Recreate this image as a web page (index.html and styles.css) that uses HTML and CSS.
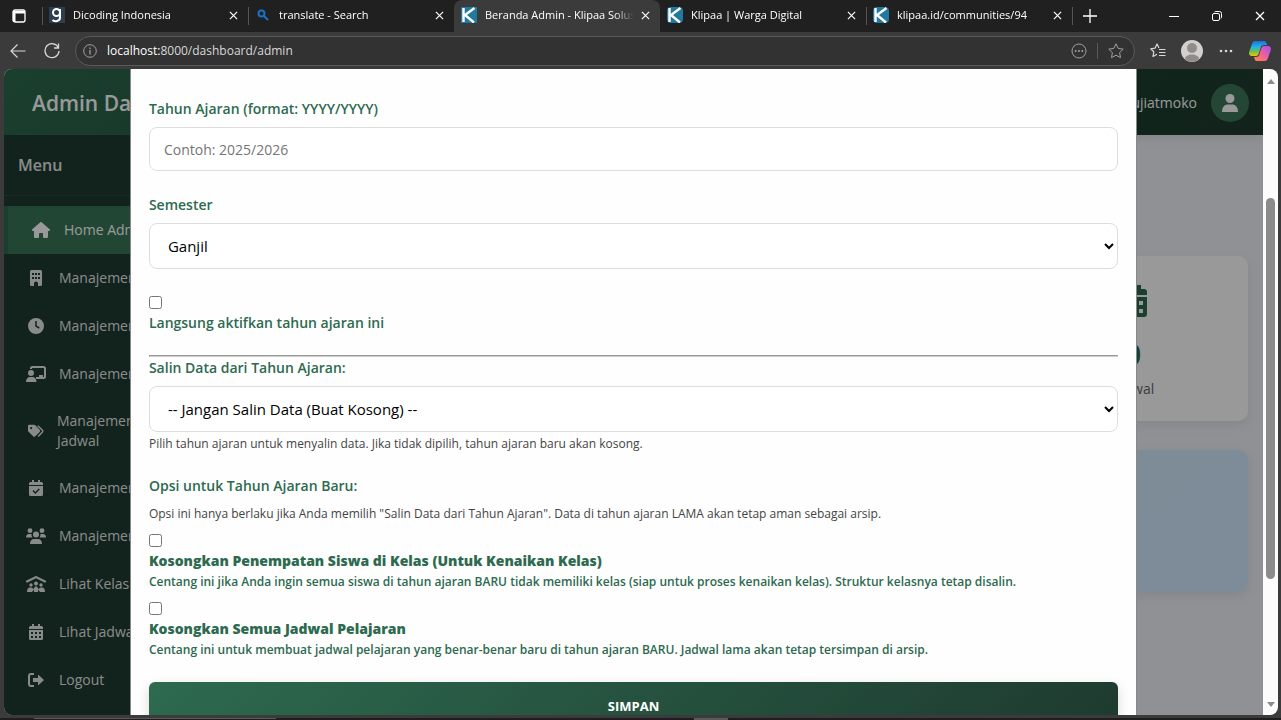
FILE: index.html
```html
<!DOCTYPE html>
<html lang="id">
<head>
    <meta charset="UTF-8">
    <meta name="viewport" content="width=device-width, initial-scale=1.0">
    <title>Beranda Admin - Klipaa Solusi</title>
    <link rel="stylesheet" href="styles.css">
</head>
<body>
    <!-- shared shapes -->
    <svg class="defs" width="0" height="0" aria-hidden="true">
        <symbol id="i-close" viewBox="0 0 10 10"><path d="M1 1l8 8M9 1L1 9" fill="none" stroke="currentColor" stroke-width="1.3"/></symbol>
        <symbol id="i-klipaa" viewBox="0 0 16 16"><path fill="#2279a0" d="M0 0h16v16H0z"/><path d="M2.500 1v14M13.500 1L4 8l9 7.500" fill="none" stroke="#fff" stroke-width="2.400"/></symbol>
        <symbol id="i-user" viewBox="0 0 16 18"><circle cx="8" cy="4.500" r="4.500"/><path d="M0 18c0-5 2.500-7.500 6-7.500h4c3.500 0 6 2.500 6 7.500z"/></symbol>
        <symbol id="i-calendar" viewBox="0 0 14 16"><path fill-rule="evenodd" d="M3 0h2v2h4V0h2v2h1.500A1.500 1.500 0 0 1 14 3.500V5H0V3.500A1.500 1.500 0 0 1 1.500 2H3zM0 6h14v8.500a1.500 1.500 0 0 1-1.500 1.500h-11A1.500 1.500 0 0 1 0 14.500zM2 8v2h2V8zm4 0v2h2V8zm4 0v2h2V8zM2 12v2h2v-2zm4 0v2h2v-2zm4 0v2h2v-2z"/></symbol>
    </svg>

    <div class="tab-bar">
        <button class="tab-actions" aria-label="Tab actions">
            <svg width="14" height="14" viewBox="0 0 14 14"><rect x="1" y="1" width="12" height="12" rx="2" fill="none" stroke="currentColor" stroke-width="1.300"/><path d="M1 2h12v2.500H1zM1 2h2.500v11H1z" fill="currentColor"/></svg>
        </button>
        <div class="tab">
            <svg class="favicon" viewBox="0 0 16 16"><path fill="#2d3e50" d="M0 0h16v16H0z"/><g fill="none" stroke="#fff" stroke-width="2"><circle cx="7.500" cy="5.500" r="3.500"/><path d="M11 2v8.500c0 4-5.500 4.500-7.500 2.500"/></g></svg>
            <span class="tab-title">Dicoding Indonesia</span>
            <button class="tab-close" aria-label="Tutup tab"><svg><use href="#i-close"/></svg></button>
        </div>
        <div class="tab">
            <svg class="favicon" viewBox="0 0 16 16"><g fill="none" stroke="#1672c9" stroke-width="2"><circle cx="6.500" cy="6.500" r="3"/><path d="M9 9l4 4"/></g></svg>
            <span class="tab-title">translate - Search</span>
            <button class="tab-close" aria-label="Tutup tab"><svg><use href="#i-close"/></svg></button>
        </div>
        <div class="tab active">
            <svg class="favicon"><use href="#i-klipaa"/></svg>
            <span class="tab-title">Beranda Admin - Klipaa Solusi</span>
            <button class="tab-close" aria-label="Tutup tab"><svg><use href="#i-close"/></svg></button>
        </div>
        <div class="tab">
            <svg class="favicon round"><use href="#i-klipaa"/></svg>
            <span class="tab-title">Klipaa | Warga Digital</span>
            <button class="tab-close" aria-label="Tutup tab"><svg><use href="#i-close"/></svg></button>
        </div>
        <div class="tab">
            <svg class="favicon round"><use href="#i-klipaa"/></svg>
            <span class="tab-title">klipaa.id/communities/94</span>
            <button class="tab-close" aria-label="Tutup tab"><svg><use href="#i-close"/></svg></button>
        </div>
        <button class="new-tab" aria-label="Tab baru"><svg width="14" height="14" viewBox="0 0 14 14"><path d="M7 0v14M0 7h14" stroke="currentColor" stroke-width="1.300"/></svg></button>
        <div class="window-buttons">
            <button aria-label="Minimize"><svg width="10" height="10" viewBox="0 0 10 10"><path d="M0 5.500h10" stroke="currentColor"/></svg></button>
            <button aria-label="Restore"><svg width="10" height="10" viewBox="0 0 10 10" fill="none" stroke="currentColor"><rect x=".5" y="2.500" width="7" height="7" rx="1.500"/><path d="M2.500 1Q3 .5 4 .5h3.500a2 2 0 0 1 2 2V6q0 1-.7 1.500"/></svg></button>
            <button aria-label="Close"><svg width="10" height="10"><use href="#i-close"/></svg></button>
        </div>
    </div>

    <div class="toolbar">
        <button class="nav-button" aria-label="Kembali"><svg width="16" height="16" viewBox="0 0 16 16" fill="none" stroke="currentColor" stroke-width="1.200"><path d="M15.500 8H1M7.500 1.500L1 8l6.500 6.500"/></svg></button>
        <button class="nav-button" aria-label="Muat ulang"><svg width="16" height="16" viewBox="0 0 16 16" fill="none" stroke="currentColor" stroke-width="1.300"><path d="M14.500 5A7 7 0 1 0 15 8M14.500 .5V5H10"/></svg></button>
        <div class="address-bar">
            <svg width="14" height="14" viewBox="0 0 14 14" fill="none" stroke="currentColor"><circle cx="7" cy="7" r="6.300"/><path d="M7 6v4.500M7 3.500V5" stroke-width="1.300"/></svg>
            <div class="address"><span class="host">localhost:</span>8000/dashboard/admin</div>
            <svg width="16" height="16" viewBox="0 0 16 16"><circle cx="8" cy="8" r="7" fill="none" stroke="currentColor"/><g fill="currentColor"><circle cx="4.700" cy="8" r="1"/><circle cx="8" cy="8" r="1"/><circle cx="11.300" cy="8" r="1"/></g></svg>
            <span class="separator"></span>
            <svg width="16" height="16" viewBox="0 0 16 16" fill="none" stroke="currentColor" stroke-linejoin="round"><path d="M8 .8l2.200 4.600 5 .7-3.600 3.500.9 5L8 12.200l-4.500 2.400.9-5L.8 6.100l5-.7z"/></svg>
        </div>
        <button class="tool-button" aria-label="Favorit"><svg width="16" height="16" viewBox="0 0 16 16" fill="none" stroke="currentColor" stroke-width="1.200" stroke-linejoin="round"><path d="M9 5L7 1 5 5.200.7 5.800l3.100 3L3 13.500l4-2.200M9 6.500h6.500M9 9.500h6.500M9 12.500h6.500"/></svg></button>
        <button class="tool-button" aria-label="Profil"><svg width="22" height="22" viewBox="0 0 22 22"><circle cx="11" cy="11" r="11" fill="#d2d0ce"/><circle cx="11" cy="8" r="5" fill="#8f8c89"/><path d="M4 19c0-6 14-6 14 0-3 3.500-11 3.500-14 0z" fill="#8f8c89"/></svg></button>
        <button class="tool-button" aria-label="Pengaturan"><svg width="14" height="14" viewBox="0 0 14 14" fill="currentColor"><circle cx="2" cy="7" r="1.300"/><circle cx="7" cy="7" r="1.300"/><circle cx="12" cy="7" r="1.300"/></svg></button>
        <button class="tool-button" aria-label="Copilot">
            <svg width="22" height="20" viewBox="0 0 22 20">
                <defs>
                    <linearGradient id="cp1" x1="0" y1="0" x2="0" y2="1"><stop offset="0" stop-color="#1b6fe0"/><stop offset=".4" stop-color="#22b5e8"/><stop offset=".7" stop-color="#6fc04b"/><stop offset="1" stop-color="#f2c500"/></linearGradient>
                    <linearGradient id="cp2" x1="1" y1="0" x2="0" y2="1"><stop offset="0" stop-color="#a04df0"/><stop offset=".5" stop-color="#ee5fa0"/><stop offset="1" stop-color="#ff8a3c"/></linearGradient>
                </defs>
                <path fill="url(#cp1)" d="M6 0h9c2 0 2.500 2 3 4h-3c-2 0-3 1-3.500 3L10 12c-.7 2.500-2 3-4 3H3c-3 0-3.500-2.500-2.500-5L3 3c.6-2 1.500-3 3-3z"/>
                <path fill="url(#cp2)" d="M16 20H8c-2 0-2.500-2-3-4h2c2 0 3-1 3.500-3L12 8c.7-2.500 2-3 4-3h3c3 0 3.500 2.500 2.500 5L19 17c-.6 2-1.500 3-3 3z"/>
            </svg>
        </button>
    </div>

    <div class="viewport">
        <div class="page">
            <header class="app-header">
                <h1>Admin Dashboard</h1>
                <div class="user-info">
                    <span>Pujiatmoko</span>
                    <div class="user-avatar"><svg width="16" height="18" fill="currentColor"><use href="#i-user"/></svg></div>
                </div>
            </header>

            <div class="app-body">
                <nav class="sidebar">
                    <h2>Menu</h2>
                    <ul>
                        <li><a class="active" href="#home">
                            <svg viewBox="0 0 576 512"><path d="M575.8 255.5c0 18-15 32.1-32 32.1l-32 0 .7 160.2c0 2.7-.2 5.4-.5 8.1l0 16.2c0 22.1-17.9 40-40 40l-16 0c-1.1 0-2.2 0-3.3-.1c-1.4 .1-2.8 .1-4.2 .1L416 512l-24 0c-22.1 0-40-17.9-40-40l0-24 0-64c0-17.700-14.300-32-32-32l-64 0c-17.700 0-32 14.300-32 32l0 64 0 24c0 22.100-17.900 40-40 40l-24 0-31.900 0c-1.500 0-3-.1-4.500-.2c-1.200 .1-2.400 .2-3.600 .2l-16 0c-22.100 0-40-17.900-40-40l0-112c0-.9 0-1.900 .1-2.800l0-69.700-32 0c-18 0-32-14-32-32.100c0-9 3-17 10-24L266.400 8c7-7 15-8 22-8s15 2 21 7L564.800 231.500c8 7 12 15 11 24z"/></svg>
                            <span>Home Admin</span></a></li>
                        <li><a href="#lembaga">
                            <svg viewBox="0 0 16 16"><path fill-rule="evenodd" d="M3.500 0h9A1.500 1.500 0 0 1 14 1.500v13a1.500 1.500 0 0 1-1.500 1.500H10v-2.500a2 2 0 0 0-4 0V16H3.500A1.500 1.500 0 0 1 2 14.500v-13A1.500 1.500 0 0 1 3.500 0zM4 3v2h2V3zm3 0v2h2V3zm3 0v2h2V3zM4 7v2h2V7zm3 0v2h2V7zm3 0v2h2V7z"/></svg>
                            <span>Manajemen</span></a></li>
                        <li><a href="#tahun-ajaran">
                            <svg viewBox="0 0 16 16"><path fill-rule="evenodd" d="M8 0a8 8 0 1 1 0 16A8 8 0 0 1 8 0zM7.250 3v5.400l3.600 2.400.9-1.300L8.750 7.600V3z"/></svg>
                            <span>Manajemen</span></a></li>
                        <li><a href="#guru">
                            <svg class="wide" viewBox="0 0 20 16"><circle cx="5" cy="7" r="3"/><path d="M0 16c0-3 1.500-5 4-5h2.500c2.500 0 4 2 4 5z"/><path d="M5 3V2.500A1.500 1.500 0 0 1 6.500 1h11A1.500 1.500 0 0 1 19 2.500v8a1.500 1.500 0 0 1-1.500 1.500H10" fill="none" stroke="currentColor" stroke-width="2"/><path d="M13 9h4v3h-4z"/></svg>
                            <span>Manajemen</span></a></li>
                        <li><a class="tall" href="#mapel">
                            <svg viewBox="0 0 18 16"><path fill-rule="evenodd" d="M0 2.500A1.500 1.500 0 0 1 1.500 1h5.300q.8 0 1.400.6l5 5q1.200 1.200 0 2.400l-5 5q-1.200 1.200-2.400 0L.6 8.800Q0 8.200 0 7.400zM3.500 3.500a1.200 1.200 0 1 0 0 2.400 1.200 1.200 0 0 0 0-2.400z"/><path d="M11 2l5 5q1.200 1.200 0 2.400l-4.500 4.700" fill="none" stroke="currentColor" stroke-width="1.600"/></svg>
                            <span>Manajemen<br>Jadwal</span></a></li>
                        <li><a href="#jadwal">
                            <svg viewBox="0 0 14 16"><path fill-rule="evenodd" d="M3 0h2v2h4V0h2v2h1.500A1.500 1.500 0 0 1 14 3.500V5H0V3.500A1.500 1.500 0 0 1 1.500 2H3zM0 6h14v8.500a1.500 1.500 0 0 1-1.500 1.500h-11A1.500 1.500 0 0 1 0 14.500zM3.500 11l2.800 3 4.500-4.500-1-1-3.500 3.400L4.600 10z"/></svg>
                            <span>Manajemen</span></a></li>
                        <li><a href="#siswa">
                            <svg class="wide" viewBox="0 0 20 16"><circle cx="4" cy="2.700" r="2.400"/><circle cx="16" cy="2.700" r="2.400"/><circle cx="10" cy="6.500" r="3"/><path d="M0 9.500C0 7.500 1 6 3 6h2.500c0 1.500.3 2.500 1 3.500zM20 9.500C20 7.500 19 6 17 6h-2.500c0 1.500-.3 2.500-1 3.500zM4 16c0-3 1.500-5 4-5h4c2.500 0 4 2 4 5z"/></svg>
                            <span>Manajemen</span></a></li>
                        <li><a href="#kelas">
                            <svg class="wide" viewBox="0 0 20 16"><path d="M1 5.500L10 1l9 4.500" fill="none" stroke="currentColor" stroke-width="2" stroke-linecap="round"/><circle cx="10" cy="7.500" r="2"/><circle cx="5" cy="9" r="1.700"/><circle cx="15" cy="9" r="1.700"/><path d="M1 16c0-3 1-4.500 3-4.500h1.500L7.500 13 9 10.500h2l1.500 2.500 2-1.500H16c2 0 3 1.500 3 4.500h-5l-2-2.500V16H8v-2.500L6 16z"/></svg>
                            <span>Lihat Kelas</span></a></li>
                        <li><a href="#lihat-jadwal">
                            <svg><use href="#i-calendar"/></svg>
                            <span>Lihat Jadwal</span></a></li>
                        <li><a href="#logout">
                            <svg viewBox="0 0 16 16"><path d="M6 2H3a2 2 0 0 0-2 2v8a2 2 0 0 0 2 2h3" fill="none" stroke="currentColor" stroke-width="2"/><path d="M5 6h5V2.500L16 8l-6 5.500V10H5z"/></svg>
                            <span>Logout</span></a></li>
                    </ul>
                </nav>

                <main class="content">
                    <div class="stats">
                        <div class="stat-card">
                            <svg width="28" height="32" fill="currentColor"><use href="#i-calendar"/></svg>
                            <div class="stat-number">0</div>
                            <div class="stat-label">Jadwal</div>
                        </div>
                    </div>
                    <div class="info-panel"></div>
                </main>
            </div>

            <div class="modal">
                <form class="modal-content">
                    <div class="form-group">
                        <label for="tahun">Tahun Ajaran (format: YYYY/YYYY)</label>
                        <input type="text" id="tahun" class="form-control" placeholder="Contoh: 2025/2026">
                    </div>
                    <div class="form-group">
                        <label for="semester">Semester</label>
                        <select id="semester" class="form-control">
                            <option>Ganjil</option>
                            <option>Genap</option>
                        </select>
                    </div>
                    <div class="check-group">
                        <input type="checkbox" id="aktif">
                        <label for="aktif">Langsung aktifkan tahun ajaran ini</label>
                    </div>
                    <hr>
                    <div class="form-group">
                        <label for="salin">Salin Data dari Tahun Ajaran:</label>
                        <select id="salin" class="form-control">
                            <option>-- Jangan Salin Data (Buat Kosong) --</option>
                        </select>
                        <small>Pilih tahun ajaran untuk menyalin data. Jika tidak dipilih, tahun ajaran baru akan kosong.</small>
                    </div>
                    <div class="options">
                        <h3>Opsi untuk Tahun Ajaran Baru:</h3>
                        <small>Opsi ini hanya berlaku jika Anda memilih "Salin Data dari Tahun Ajaran". Data di tahun ajaran LAMA akan tetap aman sebagai arsip.</small>
                        <div class="check-group">
                            <input type="checkbox" id="kosong-siswa">
                            <label for="kosong-siswa">
                                <strong>Kosongkan Penempatan Siswa di Kelas (Untuk Kenaikan Kelas)</strong>
                                <small>Centang ini jika Anda ingin semua siswa di tahun ajaran BARU tidak memiliki kelas (siap untuk proses kenaikan kelas). Struktur kelasnya tetap disalin.</small>
                            </label>
                        </div>
                        <div class="check-group">
                            <input type="checkbox" id="kosong-jadwal">
                            <label for="kosong-jadwal">
                                <strong>Kosongkan Semua Jadwal Pelajaran</strong>
                                <small>Centang ini untuk membuat jadwal pelajaran yang benar-benar baru di tahun ajaran BARU. Jadwal lama akan tetap tersimpan di arsip.</small>
                            </label>
                        </div>
                    </div>
                    <button type="submit" class="submit-btn">SIMPAN</button>
                </form>
            </div>
        </div>

        <div class="scrollbar">
            <svg width="8" height="5" viewBox="0 0 8 5"><path d="M4 0l4 5H0z"/></svg>
            <div class="scroll-track">
                <div class="scroll-thumb"></div>
            </div>
            <svg width="8" height="5" viewBox="0 0 8 5"><path d="M0 0h8L4 5z"/></svg>
        </div>
    </div>

    <div class="taskbar">
        <span class="task-wide"></span>
        <span class="task-small"></span>
    </div>
</body>
</html>
```

FILE: styles.css
```css
:root {
    --green: #2d6a4f;
    --green-dark: #1b4332;
    --sidebar: #1e3a2f;
    --chrome: #3b3b3b;
    --chrome-dark: #202020;
}

* {
    box-sizing: border-box;
}

body {
    margin: 0;
    height: 100vh;
    display: flex;
    flex-direction: column;
    overflow: hidden;
    font-family: "Open Sans", "Segoe UI", sans-serif;
    font-size: 14px;
    line-height: 20px;
    background: var(--chrome);
}

button {
    font: inherit;
    color: inherit;
    background: none;
    border: 0;
    padding: 0;
}

svg {
    flex: none;
}

.defs {
    position: absolute;
}

/* Browser tabs */
.tab-bar {
    display: flex;
    flex: none;
    height: 32px;
    background: var(--chrome-dark);
    color: #fff;
    font-size: 11px;
}

.tab-bar button {
    display: flex;
    align-items: center;
    justify-content: center;
}

.tab-actions {
    width: 38px;
    margin-right: 4px;
    flex: none;
}

.tab {
    display: flex;
    align-items: center;
    flex: 0 1 206px;
    min-width: 0;
    padding: 0 8px 2px 7px;
    background: linear-gradient(#555, #555) left center / 1px 18px no-repeat;
}

.tab.active {
    background: var(--chrome);
    border-radius: 8px 8px 0 0;
}

.tab.active + .tab {
    background: none;
}

.favicon {
    width: 16px;
    height: 16px;
}

.favicon.round {
    border-radius: 4px;
}

.tab-title {
    flex: 1;
    min-width: 0;
    margin: 0 4px 0 8px;
    white-space: nowrap;
    overflow: hidden;
    mask-image: linear-gradient(to right, #000 calc(100% - 20px), transparent);
}

.tab-close {
    width: 14px;
    height: 14px;
}

.tab-close svg {
    width: 9px;
    height: 9px;
}

.new-tab {
    width: 36px;
    flex: none;
    background: linear-gradient(#555, #555) left center / 1px 18px no-repeat;
}

.window-buttons {
    display: flex;
    margin-left: auto;
}

.window-buttons button {
    width: 43px;
}

/* Address bar */
.toolbar {
    display: flex;
    align-items: center;
    flex: none;
    height: 37px;
    padding: 0 4px 0 1px;
    color: #d8d8d8;
}

.toolbar button {
    display: flex;
    justify-content: center;
    width: 34px;
    flex: none;
}

.address-bar {
    display: flex;
    align-items: center;
    flex: 1;
    gap: 10px;
    height: 30px;
    margin: 0 6px;
    padding: 0 10px 0 7px;
    border: 1px solid #5a5a5a;
    border-radius: 15px;
    background: #323232;
    color: #a0a0a0;
}

.address {
    flex: 1;
    font-size: 12px;
    color: #d8d8d8;
}

.host {
    color: #fff;
}

.separator {
    width: 1px;
    height: 16px;
    background: #5a5a5a;
}

/* Page area */
.viewport {
    display: flex;
    flex: 1;
    min-height: 0;
    margin: 0 3px 3px 4px;
    border-radius: 8px;
    overflow: hidden;
}

.page {
    position: relative;
    display: flex;
    flex-direction: column;
    flex: 1;
    min-width: 0;
    background: #f0f2f7;
    overflow: hidden;
}

.app-header {
    display: flex;
    align-items: center;
    justify-content: space-between;
    flex: none;
    height: 66px;
    padding: 2px 14px 0 28px;
    color: #fff;
    background: linear-gradient(135deg, var(--green), var(--green-dark) 70%, var(--sidebar));
    box-shadow: 0 2px 10px rgba(0, 0, 0, 0.1);
}

.app-header h1 {
    margin: 0;
    font-size: 21px;
    line-height: 28px;
    font-weight: 600;
}

.user-info {
    display: flex;
    align-items: center;
    gap: 14px;
}

.user-avatar {
    display: flex;
    align-items: center;
    justify-content: center;
    width: 38px;
    height: 38px;
    border-radius: 50%;
    background: #3b7659;
}

.app-body {
    display: flex;
    flex: 1;
    min-height: 0;
}

.sidebar {
    width: 250px;
    flex: none;
    background: var(--sidebar);
    color: #e3e8e6;
}

.sidebar h2 {
    margin: 0 0 10px;
    padding: 20px 14px;
    font-size: 16px;
    font-weight: 600;
    border-bottom: 1px solid #31493f;
}

.sidebar ul {
    margin: 0;
    padding: 0;
    list-style: none;
}

.sidebar a {
    display: grid;
    grid-template-columns: 20px 1fr;
    align-items: center;
    gap: 13px;
    padding: 14px 22px;
    color: inherit;
    text-decoration: none;
}

.sidebar a.active {
    padding-left: 23px;
    color: #fff;
    background: #397658;
    border-left: 4px solid var(--green);
}

.sidebar a.tall {
    gap: 11px;
    padding-top: 13px;
    padding-bottom: 13px;
}

.sidebar svg {
    width: 16px;
    height: 16px;
    justify-self: center;
    fill: currentColor;
}

.sidebar .active svg {
    width: 18px;
}

.sidebar svg.wide {
    width: 20px;
}

.content {
    flex: 1;
    padding: 121px 15px 0;
}

.stats {
    display: grid;
    grid-template-columns: repeat(4, 1fr);
    gap: 20px;
    margin-bottom: 29px;
}

.stat-card {
    grid-column: 4;
    display: flex;
    flex-direction: column;
    align-items: center;
    padding: 29px 20px 22px;
    border-radius: 10px;
    background: #fff;
    box-shadow: 0 4px 12px rgba(0, 0, 0, 0.08);
    color: var(--green);
}

.stat-number {
    margin: 21px 0 9px;
    font-size: 28px;
    line-height: 32px;
    font-weight: 700;
}

.stat-label {
    color: #666;
}

.info-panel {
    height: 142px;
    border-radius: 10px;
    background: linear-gradient(135deg, #d9e8fc, #d0e9fd);
    box-shadow: 0 4px 12px rgba(0, 0, 0, 0.08);
}

/* Modal lies over the whole page area */
.modal {
    position: absolute;
    inset: 0;
    overflow: hidden;
    background: rgba(0, 0, 0, 0.4);
}

.modal-content {
    width: 80%;
    margin: 0 auto;
    padding: 30px 18px 20px;
    border: 1px solid #888;
    border-width: 0 1px;
    background: #fefefe;
    color: var(--green);
}

.modal-content label,
.modal-content h3 {
    display: block;
    margin: 0 0 8px;
    font-size: 14px;
    font-weight: 600;
}

.form-group {
    margin-bottom: 24px;
}

.form-control {
    display: block;
    width: 100%;
    height: 46px;
    padding: 0 14px;
    border: 1px solid #ddd;
    border-radius: 8px;
    background: #fff;
    color: #000;
    font: inherit;
}

select.form-control {
    padding-right: 0;
    font-size: 15px;
}

input.form-control {
    height: 44px;
}

.form-control::placeholder {
    color: #757575;
}

.modal-content small {
    display: block;
    margin-top: 4px;
    font-size: 12px;
    line-height: 16px;
    color: #444;
}

.modal-content h3 {
    margin-bottom: 10px;
}

.options h3 + small {
    margin-top: 0;
}

.check-group {
    margin-top: 12px;
}

.form-group + .check-group {
    margin-top: 27px;
}

.check-group input {
    display: block;
    width: 13px;
    height: 13px;
    margin: 0 0 4px;
}

.modal-content .check-group label {
    margin: 0;
}

.check-group strong {
    display: block;
    font-weight: 800;
}

.modal-content .check-group small {
    margin-top: 3px;
    color: var(--green);
}

.modal-content hr {
    margin: 22px 0 1px;
    border: 1px solid #aaa;
    border-color: #999 #ccc #ccc #999;
}

.submit-btn {
    display: block;
    width: 100%;
    margin-top: 24px;
    padding: 14px;
    border-radius: 6px;
    background: linear-gradient(135deg, var(--green), var(--sidebar));
    color: #fff;
    font-size: 13px;
    font-weight: 700;
    box-shadow: 0 4px 12px rgba(0, 0, 0, 0.15);
}

/* Scrollbar */
.scrollbar {
    display: flex;
    flex-direction: column;
    align-items: center;
    width: 15px;
    flex: none;
    padding: 10px 0 8px;
    background: #fcfcfc;
    fill: #8b8b8b;
}

.scroll-track {
    display: flex;
    flex-direction: column;
    flex: 1;
    width: 9px;
}

.scroll-track::before {
    content: "";
    flex: 113;
}

.scroll-track::after {
    content: "";
    flex: 122;
}

.scroll-thumb {
    flex: 380;
    border-radius: 5px;
    background: #8b8b8b;
}

/* Windows taskbar edge */
.taskbar {
    display: flex;
    flex: none;
    height: 2px;
    padding-left: 34px;
    background: #201c1f;
}

.task-wide {
    width: 242px;
    height: 1px;
    background: #5a5a5a;
}

.task-small {
    width: 34px;
    margin-left: 418px;
    background: #5a5a5a;
}
```
